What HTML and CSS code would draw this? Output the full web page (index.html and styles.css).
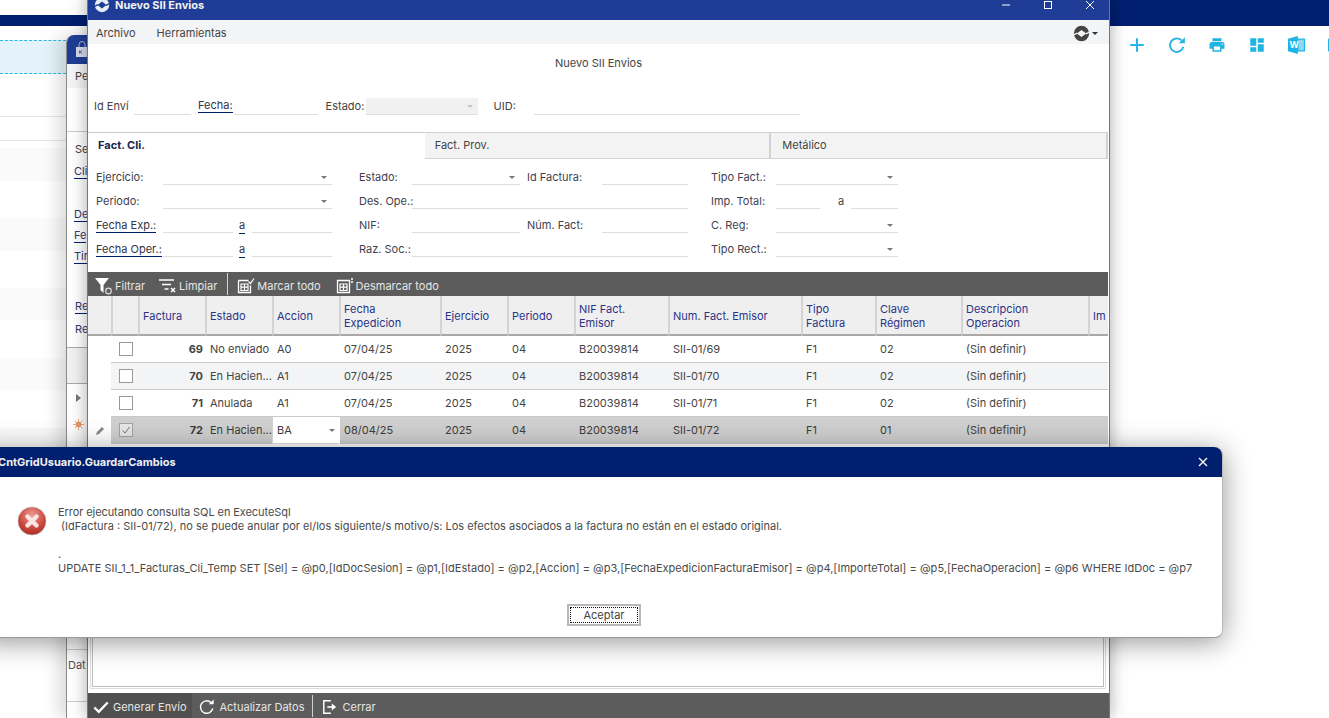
FILE: index.html
```html
<!DOCTYPE html>
<html lang="es">
<head>
<meta charset="utf-8">
<title>Nuevo SII Envios</title>
<link rel="stylesheet" href="styles.css">
</head>
<body>
<div class="desktop">
  <div class="navbar"></div>
  <div class="corner-tab"><span>ana</span></div>
  <div class="page">
    <div class="page-left">
      <div class="selected-row"></div>
      <div class="p-row h43 line"></div>
      <div class="p-row h24 line"></div>
      <div class="p-row h7"></div>
      <div class="p-row h33 alt"></div>
      <div class="p-row h37"></div>
      <div class="p-row h33 alt"></div>
      <div class="p-row h37"></div>
      <div class="p-row h32 alt"></div>
      <div class="p-row h38"></div>
      <div class="p-row h32 alt"></div>
      <div class="p-row h38"></div>
      <div class="p-row h32 alt"></div>
    </div>
    <div class="page-tools">
      <svg class="tool-ic" viewBox="0 0 16 16"><path d="M8 2v12M2 8h12" fill="none" stroke="#29b6e6" stroke-width="1.800"/></svg>
      <svg class="tool-ic" viewBox="0 0 16 16"><path d="M13.600 9.500a6 6 0 1 1-1.600-5.600" fill="none" stroke="#29b6e6" stroke-width="1.700"/><path d="M9.500 6.500h5.500V1z" fill="#29b6e6"/></svg>
      <svg class="tool-ic" viewBox="0 0 24 24"><path fill="#1fb4e4" d="M19 8H5c-1.660 0-3 1.340-3 3v6h4v4h12v-4h4v-6c0-1.660-1.340-3-3-3zm-3 11H8v-5h8v5zm3-7c-.550 0-1-.450-1-1s.450-1 1-1 1 .450 1 1-.450 1-1 1zm-1-9H6v4h12V3z"/></svg>
      <svg class="tool-ic" viewBox="0 0 24 24"><path fill="#1fb4e4" d="M3 13h8V3H3v10zm0 8h8v-6H3v6zm10 0h8V11h-8v10zm0-18v6h8V3h-8z"/></svg>
      <svg class="tool-ic" viewBox="0 0 20 20"><path fill="#1fb4e4" d="M0 3l11-3v20L0 17z"/><path fill="#8fd8f2" stroke="#1fb4e4" stroke-width="1.400" d="M11 3.500h7.300v13H11z"/><text x="1.600" y="13.600" class="word-w">W</text></svg>
      <svg class="tool-ic" viewBox="0 0 20 20"><path fill="#1fb4e4" d="M0 3l11-3v20L0 17z"/></svg>
    </div>
  </div>

  <section class="win back-win">
    <div class="back-title">
      <svg class="lock" viewBox="0 0 12 16"><path d="M3 6V3.500a3 3 0 0 1 6 0V6" fill="none" stroke="#aeb8d6" stroke-width="1"/><rect y="6" width="11" height="10" fill="#d5dbea"/><path d="M3.500 9.500v3M6 9.500L4 11l2 1.500" fill="none" stroke="#3a5099" stroke-width=".8"/></svg>
    </div>
    <div class="back-menu">Pe</div>
    <div class="back-body">
      <div class="b-sep s0"></div>
      <div class="b-line t-se">Se</div>
      <div class="b-line t-cli"><a class="ul">Cli</a></div>
      <div class="b-line t-de"><a class="ul">De</a></div>
      <div class="b-line t-fe"><a class="ul">Fe</a></div>
      <div class="b-line t-ti"><a class="ul">Tir</a></div>
      <div class="b-line t-re"><a class="ul">Re</a></div>
      <div class="b-line t-re2">Re</div>
      <div class="b-band"></div>
      <span class="b-arrow"></span>
      <svg class="b-sun" viewBox="0 0 12 12"><circle cx="6" cy="6" r="3" fill="#e8914f"/><path d="M6 0v12M0 6h12M1.800 1.800l8.400 8.400M10.200 1.800l-8.400 8.400" stroke="#e8a070" stroke-width="1"/></svg>
      <div class="b-line t-dat">Dat</div>
      <div class="b-sep s3"></div>
      <div class="b-sep s4"></div>
    </div>
  </section>

  <section class="win main-win">
    <header class="title-bar">
      <svg class="logo" viewBox="0 0 20 20"><path fill="#e9edf6" fill-rule="evenodd" d="M10 1a9 9 0 1 1 0 18 9 9 0 1 1 0-18zM10 5.500L4.500 10l5.500 4.500 5.500-4.500z"/><path d="M0 12l5-2.500M15 10.500L20 8" stroke="#1f3d96" stroke-width="1.600"/></svg>
      <span class="title-text">Nuevo SII Envios</span>
      <div class="win-controls">
        <svg viewBox="0 0 8 8"><path d="M0 4h8" stroke="#fff" stroke-width="1"/></svg>
        <svg viewBox="0 0 8 8"><rect x=".5" y=".5" width="7" height="7" fill="none" stroke="#fff" stroke-width="1"/></svg>
        <svg viewBox="0 0 8 8"><path d="M0 0l8 8M8 0L0 8" stroke="#fff" stroke-width="1"/></svg>
      </div>
    </header>
    <nav class="menu-bar">
      <span>Archivo</span><span>Herramientas</span>
      <span class="menu-logo">
        <svg viewBox="0 0 20 20"><path fill="#444" fill-rule="evenodd" d="M10 1a9 9 0 1 1 0 18 9 9 0 1 1 0-18zM10 6L4.500 10l5.500 4 5.500-4z"/><path d="M0 12l5-2.500M15 10.500L20 8" stroke="#f3f4f6" stroke-width="1.600"/></svg>
        <i class="caret dark"></i>
      </span>
    </nav>
    <h1 class="form-title">Nuevo SII Envios</h1>
    <div class="head-row">
      <label class="lb w-id">Id Enví</label><span class="inp w-idv"></span>
      <a class="lb lk w-fe">Fecha:</a><span class="inp w-fev"></span>
      <label class="lb w-es">Estado:</label><span class="inp disabled w-esv"><i class="caret pale"></i></span>
      <label class="lb w-ui">UID:</label><span class="inp w-uiv"></span>
    </div>
    <div class="tabs">
      <div class="tab active t1">Fact. Cli.</div>
      <div class="tab t2">Fact. Prov.</div>
      <div class="tab t3">Metálico</div>
    </div>
    <div class="filters">
      <label>Ejercicio:</label><span class="inp"><i class="caret"></i></span>
      <label class="c2">Estado:</label><span class="inp"><i class="caret"></i></span>
      <label class="c3">Id Factura:</label><span class="inp"></span>
      <label class="c4">Tipo Fact.:</label><span class="inp"><i class="caret"></i></span>

      <label>Periodo:</label><span class="inp"><i class="caret"></i></span>
      <label class="c2">Des. Ope.:</label><span class="inp span3"></span>
      <label class="c4">Imp. Total:</label><span class="range"><span class="inp r1"></span><span class="ra plain-a">a</span><span class="inp r2"></span></span>

      <label><a class="lk">Fecha Exp.:</a></label><span class="range"><span class="inp rd1"></span><a class="lk ra">a</a><span class="inp rd2"></span></span>
      <label class="c2">NIF:</label><span class="inp"></span>
      <label class="c3">Núm. Fact:</label><span class="inp"></span>
      <label class="c4">C. Reg:</label><span class="inp"><i class="caret"></i></span>

      <label><a class="lk">Fecha Oper.:</a></label><span class="range"><span class="inp rd1"></span><a class="lk ra">a</a><span class="inp rd2"></span></span>
      <label class="c2">Raz. Soc.:</label><span class="inp span3"></span>
      <label class="c4">Tipo Rect.:</label><span class="inp"><i class="caret"></i></span>
    </div>
    <div class="grid-toolbar">
      <span class="gt f"><svg viewBox="0 0 18 18"><path fill="#fff" d="M0 1h14L8.500 8v8L5.500 13V8z"/><circle cx="13.500" cy="14" r="2.800" fill="none" stroke="#ddd" stroke-width="1.200"/></svg>Filtrar</span>
      <span class="gt l"><svg viewBox="0 0 18 18"><path d="M0 3h15M3 7.500h9M5.500 12h4" stroke="#fff" stroke-width="1.400"/><path d="M12 11l4 4M16 11l-4 4" stroke="#fff" stroke-width="1.500"/></svg>Limpiar</span>
      <span class="gt-sep"></span>
      <span class="gt m"><svg viewBox="0 0 18 18"><path d="M1.500 3.500h10M1.500 3.500v12h12v-7" fill="none" stroke="#fff" stroke-width="1.300"/><path d="M4 7h7v6.500H4zM7.500 7v6.500M4 10.200h7" fill="none" stroke="#fff" stroke-width="1.200"/><path d="M11.500 4.500l2 2 3.500-5" fill="none" stroke="#fff" stroke-width="1.200"/></svg>Marcar todo</span>
      <span class="gt d"><svg viewBox="0 0 18 18"><path d="M1.500 3.500v12h12v-12zM15 2h2M15 5h2" fill="none" stroke="#fff" stroke-width="1.300"/><path d="M4 7h7v6.500H4zM7.500 7v6.500M4 10.200h7" fill="none" stroke="#fff" stroke-width="1.200"/></svg>Desmarcar todo</span>
    </div>
    <table class="grid">
      <colgroup>
        <col class="k1"><col class="k2"><col class="k3"><col class="k3"><col class="k3"><col class="k4"><col class="k3"><col class="k3"><col class="k5"><col class="k6"><col class="k7"><col class="k8"><col class="k9"><col class="k10">
      </colgroup>
      <thead>
        <tr>
          <th></th><th></th><th>Factura</th><th>Estado</th><th>Accion</th><th>Fecha<br>Expedicion</th><th>Ejercicio</th><th>Periodo</th><th>NIF Fact.<br>Emisor</th><th>Num. Fact. Emisor</th><th>Tipo<br>Factura</th><th>Clave<br>Régimen</th><th>Descripcion<br>Operacion</th><th class="clip">Im</th>
        </tr>
      </thead>
      <tbody>
        <tr><td></td><td class="chk"><span class="box"></span></td><td class="num">69</td><td>No enviado</td><td>A0</td><td>07/04/25</td><td>2025</td><td>04</td><td>B20039814</td><td>SII-01/69</td><td>F1</td><td>02</td><td>(Sin definir)</td><td></td></tr>
        <tr class="alt"><td class="plain"></td><td class="chk"><span class="box"></span></td><td class="num">70</td><td>En Hacien...</td><td>A1</td><td>07/04/25</td><td>2025</td><td>04</td><td>B20039814</td><td>SII-01/70</td><td>F1</td><td>02</td><td>(Sin definir)</td><td></td></tr>
        <tr><td></td><td class="chk"><span class="box"></span></td><td class="num">71</td><td>Anulada</td><td>A1</td><td>07/04/25</td><td>2025</td><td>04</td><td>B20039814</td><td>SII-01/71</td><td>F1</td><td>02</td><td>(Sin definir)</td><td></td></tr>
        <tr class="sel"><td class="plain pen"><svg viewBox="0 0 10 10"><path d="M1 9l1-3 5-5 2 2-5 5z" fill="#888"/></svg></td><td class="chk"><span class="box on"><svg viewBox="0 0 12 12"><path d="M2.500 6.500l2.500 2.500 4.500-6" fill="none" stroke="#777" stroke-width="1"/></svg></span></td><td class="num">72</td><td>En Hacien...</td><td class="editor">BA<i class="caret"></i></td><td>08/04/25</td><td>2025</td><td>04</td><td>B20039814</td><td>SII-01/72</td><td>F1</td><td>01</td><td>(Sin definir)</td><td></td></tr>
      </tbody>
    </table>
    <div class="groupbox"></div>
    <footer class="bottom-bar">
      <span class="bb first"><svg viewBox="0 0 18 18"><path d="M1.500 9.500l5 5L16.500 4" fill="none" stroke="#fff" stroke-width="2.600"/></svg>Generar Envío</span>
      <span class="bb"><svg viewBox="0 0 18 18"><path d="M15.500 10.500a7 7 0 1 1-2-6.500" fill="none" stroke="#fff" stroke-width="1.600"/><path d="M11 6h5.500V.5z" fill="#fff"/></svg>Actualizar Datos</span>
      <span class="gt-sep tall"></span>
      <span class="bb"><svg viewBox="0 0 18 18"><path d="M10 2H2v14h8" fill="none" stroke="#fff" stroke-width="1.600"/><path d="M6 9h6" stroke="#fff" stroke-width="1.800"/><path d="M11 5l5 4-5 4z" fill="#fff"/></svg>Cerrar</span>
    </footer>
  </section>

  <section class="win dialog">
    <header class="dlg-title"><span>CntGridUsuario.GuardarCambios</span><svg viewBox="0 0 10 10"><path d="M1 1l8 8M9 1l-8 8" stroke="#fff" stroke-width="1.300"/></svg></header>
    <div class="dlg-body">
      <svg class="err" viewBox="0 0 30 30"><defs><radialGradient id="eg" cx="50%" cy="30%" r="75%"><stop offset="0" stop-color="#ee9c92"/><stop offset=".6" stop-color="#cb4a40"/><stop offset="1" stop-color="#a8271f"/></radialGradient></defs><circle cx="15" cy="15" r="14" fill="url(#eg)" stroke="#b5b5b5" stroke-width=".6"/><path d="M10.500 10.500l9 9M19.500 10.500l-9 9" stroke="#fbe6e4" stroke-width="4.400" stroke-linecap="round"/></svg>
      <p class="dlg-msg"><span class="m1">Error ejecutando consulta SQL en ExecuteSql</span><br>&nbsp;(IdFactura : SII-01/72), no se puede anular por el/los siguiente/s motivo/s: Los efectos asociados a la factura no están en el estado original.<br><br>.<br><span class="m2">UPDATE SII_1_1_Facturas_Cli_Temp SET [Sel] = @p0,[IdDocSesion] = @p1,[IdEstado] = @p2,[Accion] = @p3,[FechaExpedicionFacturaEmisor] = @p4,[ImporteTotal] = @p5,[FechaOperacion] = @p6 WHERE IdDoc = @p7</span></p>
    </div>
    <div class="dlg-actions"><button class="btn"><span>Aceptar</span></button></div>
  </section>
</div>
</body>
</html>
```
FILE: styles.css
```css
* { box-sizing: border-box; }
html, body { margin: 0; padding: 0; }
body { background: #fff; font-family: Inter, "Liberation Sans", sans-serif; font-size: 11px; color: #444; }
.desktop { position: relative; width: 1329px; height: 718px; overflow: hidden; background: #fff; }

.navbar { height: 26px; background: #001f6f; }
.corner-tab { position: absolute; left: 0; top: 0; width: 87px; height: 15px; background: #fff; }
.corner-tab span { position: absolute; left: -12px; top: -11px; color: #333; }
.page { display: flex; justify-content: space-between; }
.page-left { width: 66px; padding-top: 14px; }
.selected-row { height: 34px; background: #e4f3f9; border-top: 1px dashed #22bbe6; border-bottom: 1px dashed #22bbe6; }
.p-row.line { border-bottom: 1px solid #e8e8e8; }
.p-row.alt { background: #fafafa; }
.h7 { height: 7px; } .h43 { height: 43px; } .h24 { height: 24px; } .h32 { height: 32px; } .h33 { height: 33px; } .h37 { height: 37px; } .h38 { height: 38px; }
.page-tools { display: flex; gap: 22px; padding: 10px 0 0; width: 210px; margin-right: -9px; }
.tool-ic { width: 18px; height: 18px; flex: none; }
.word-w { font: bold 10px Inter, sans-serif; fill: #fff; }

.win { position: absolute; }

.back-win { left: 66px; top: 35px; width: 40px; height: 683px; background: #fff; border-left: 1px solid #8a8a8a; border-radius: 8px 0 0 0; box-shadow: -8px 0 16px rgba(0,0,0,.14); overflow: hidden; }
.back-title { height: 29px; background: #1f3d96; padding: 6px 0 0 9px; }
.lock { width: 12px; height: 16px; display: block; }
.back-menu { height: 24px; background: #f3f4f6; line-height: 24px; padding-left: 8px; color: #444; }
.back-body { position: relative; }
.b-line { position: absolute; left: 8px; color: #444; }
.ul { color: #333a70; border-bottom: 1px solid #001f6f; padding-bottom: 0; }
.t-se { top: 54px; } .t-cli { top: 76px; left: 7px; } .t-de { top: 119px; left: 7px; } .t-fe { top: 140px; left: 7px; } .t-ti { top: 161px; left: 7px; } .t-re { top: 211px; left: 8px; } .t-re2 { top: 234px; color: #333a70; }
.t-dat { top: 570px; left: 1px; color: #555; }
.b-sep { position: absolute; left: 0; right: 0; border-top: 1px solid #ccc; }
.s0 { top: 43px; }
.s3 { top: 561px; } .s4 { top: 613px; }
.b-band { position: absolute; left: 0; right: 0; top: 259px; height: 37px; background: #f1f1f1; border-top: 1px solid #aaa; border-bottom: 1px solid #aaa; }
.b-arrow { position: absolute; left: 9px; top: 306px; border-left: 5px solid #777; border-top: 4px solid transparent; border-bottom: 4px solid transparent; }
.b-sun { position: absolute; left: 6px; top: 331px; width: 11px; height: 11px; }

.main-win { left: 87px; top: -5px; width: 1023px; height: 723px; background: #fff; border-left: 1px solid #777; border-right: 1px solid #777; box-shadow: 0 0 16px rgba(0,0,0,.34); display: flex; flex-direction: column; }
.title-bar { flex: none; height: 25px; background: #1f3d96; display: flex; align-items: center; padding: 0 0 5px 6px; color: #f2f2f2; font-weight: 700; }
.logo { width: 16px; height: 16px; margin-right: 5px; }
.title-text { flex: 1; }
.win-controls { display: flex; gap: 34px; padding-right: 15px; }
.win-controls svg { width: 8px; height: 8px; display: block; }
.menu-bar { flex: none; height: 24px; padding-top: 2px; background: #f3f4f6; display: flex; align-items: center; gap: 21px; padding-left: 8px; color: #444; }
.menu-logo { margin-left: auto; display: flex; align-items: center; gap: 2px; padding-right: 11px; }
.menu-logo svg { width: 17px; height: 17px; }
.caret { display: inline-block; width: 0; height: 0; border-left: 3px solid transparent; border-right: 3px solid transparent; border-top: 3px solid #777; position: absolute; right: 5px; top: 9px; }
.caret.dark { position: static; border-top-color: #333; }
.caret.pale { border-top-color: #c5c5c5; top: 7px; }

.form-title { flex: none; margin: 0; height: 39px; padding-top: 12px; text-align: center; font-size: 11px; font-weight: 400; color: #444; line-height: 14px; }
.head-row { flex: none; height: 32px; display: flex; align-items: flex-end; padding: 0 0 0 6px; margin-bottom: 17px; }
.lb { line-height: 14px; padding-bottom: 2px; color: #444; display: block; }
.w-id { width: 40px; } .w-idv { width: 57px; }
.w-fe { margin-left: 7px; padding-bottom: 0; margin-bottom: 2px; margin-right: 2px; }
.w-fev { width: 83px; }
.w-es { margin-left: 8px; width: 40px; }
.w-esv { width: 112px; background: #f1f1f1; height: 17px; }
.w-ui { margin-left: 16px; width: 40px; }
.w-uiv { width: 266px; }
.lk { color: #334; border-bottom: 1px solid #001f6f; text-decoration: none; }
.inp { display: block; position: relative; height: 17px; border-bottom: 1px solid #dedede; }

.tabs { flex: none; display: flex; height: 27px; padding-right: 1px; }
.tab { line-height: 25px; padding-left: 10px; border-top: 1px solid #d2d2d2; border-bottom: 1px solid #d2d2d2; border-right: 2px solid #d2d2d2; background: #f3f3f3; color: #444; }
.tab.active { background: #fff; border-bottom: 0; border-right: 0; border-top-color: #cdcdcd; color: #16234f; font-weight: 700; }
.t1 { width: 337px; } .t2 { width: 347px; } .t3 { width: 337px; padding-left: 11px; }

.filters { flex: none; display: grid; grid-template-columns: 67px 169px 80px 108px 82px 86px 88px 122px; grid-auto-rows: 24px; padding: 7px 0 0 8px; height: 113px; }
.filters label { line-height: 22px; padding-top: 0; color: #3f3f4f; white-space: nowrap; }
.filters .c2 { padding-left: 27px; }
.filters .c3 { padding-left: 7px; }
.filters .c4 { padding-left: 23px; }
.filters .inp { height: 18px; margin-top: 1px; }
.span3 { grid-column: span 3; }
.range { display: flex; margin-top: 1px; height: 18px; line-height: 22px; }
.filters .range .inp { margin-top: 0; flex: none; }
.rd1 { width: 70px; } .rd2 { width: 80px; margin-left: 7px; }
.r1 { width: 44px; } .r2 { width: 47px; margin-left: 7px; }
.range .ra { width: 6px; margin-left: 6px; height: 15px; line-height: 13px; margin-top: 4px; flex: none; }
.range .plain-a { margin-left: 18px; }

.grid-toolbar { flex: none; height: 24px; margin-right: 1px; background: #5c5c5c; display: flex; align-items: center; color: #e6e6e6; }
.gt { display: flex; align-items: center; gap: 2px; padding-top: 3px; }
.gt svg { width: 18px; height: 18px; }
.f { margin-left: 7px; }
.l { margin-left: 14px; }
.gt-sep { width: 1px; height: 22px; background: #d0d0d0; margin-left: 10px; }
.m { margin-left: 9px; }
.d { margin-left: 15px; }

.grid { flex: none; width: 1020px; margin-right: 1px; border-collapse: separate; border-spacing: 0; table-layout: fixed; font-size: 11px; }
.k1 { width: 23px; } .k2 { width: 27px; } .k3 { width: 67px; } .k4 { width: 101px; } .k5 { width: 94px; } .k6 { width: 133px; } .k7 { width: 74px; } .k8 { width: 86px; } .k9 { width: 127px; } .k10 { width: 20px; }
.grid th { height: 40px; padding: 2px 0 0 3px; background: #efefef; border-left: 2px solid #d4d4d4; border-bottom: 2px solid #a9a9a9; text-align: left; font-weight: 400; color: #2a3487; line-height: 14px; overflow: hidden; white-space: nowrap; }
.grid th:first-child { border-left: 0; }
.grid td { height: 27px; padding: 0 0 0 5px; border-bottom: 1px solid #c9c9c9; color: #444; white-space: nowrap; overflow: hidden; position: relative; }
.grid td:first-child { border-bottom: 0; }
.alt td { background: #f3f4f6; }
.alt td.plain { background: #fff; }
.sel td { background: #cfcfcf; color: #3c3c3c; }
.sel td.plain { background: #fff; }
.pen svg { width: 10px; height: 10px; display: block; margin: 0 0 0 2px; }
.chk { padding-left: 8px !important; }
.box { display: block; width: 14px; height: 14px; background: #fff; border: 1px solid #999; }
.box.on { background: #e6e6e6; border-color: #a3a3a3; }
.box svg { display: block; width: 12px; height: 12px; }
.num { text-align: right; font-weight: 700; padding-right: 2px !important; color: #333; }
.sel td.editor { background: linear-gradient(to right, #cfcfcf 1px, #fff 1px); overflow: visible; box-shadow: 1px 0 0 #fff; z-index: 1; }
.editor .caret { top: 12px; right: 4px; }

.groupbox { position: absolute; left: 4px; right: 5px; top: 605px; height: 87px; border: 1px solid #bdbdbd; outline: 1px solid #ddd; outline-offset: 1px; background: #fff; }
.bottom-bar { margin-top: auto; flex: none; height: 25px; background: #5c5c5c; display: flex; align-items: center; color: #e6e6e6; position: relative; }
.bb { display: flex; align-items: center; gap: 4px; height: 25px; padding-top: 2px; }
.bb svg { width: 16px; height: 16px; }
.first { background: #505050; padding: 2px 6px 0 5px; margin-right: 7px; }
.tall { height: 22px; margin-left: 8px; margin-right: 9px; }

.dialog { left: -20px; top: 447px; width: 1243px; height: 191px; background: #fff; border-radius: 0 8px 8px 0; box-shadow: 0 4px 28px rgba(0,0,0,.42); border-bottom: 1px solid #999; border-right: 1px solid #bbb; }
.dlg-title { height: 30px; background: #001f6f; color: #f1f1f1; font-weight: 700; display: flex; align-items: center; justify-content: space-between; padding: 0 14px 0 18px; border-radius: 0 8px 0 0; }
.dlg-title svg { width: 10px; height: 10px; }
.dlg-body { display: flex; height: 116px; padding: 28px 0 0 37px; }
.err { width: 30px; height: 30px; margin-top: 1px; flex: none; }
.dlg-msg { margin: 0 0 0 11px; line-height: 14px; color: #4a4a4a; white-space: nowrap; }
.m1 { letter-spacing: -.08px; }
.m2 { letter-spacing: .03px; }
.dlg-actions { display: flex; justify-content: center; padding-left: 6px; }
.btn { width: 74px; height: 22px; margin: 11px 0 0; padding: 1px; background: #fff; border: 2px solid #b8b8b8; font: 11px Inter, sans-serif; color: #444; }
.btn span { display: block; height: 16px; line-height: 14px; border: 1px dotted #111; }
```
